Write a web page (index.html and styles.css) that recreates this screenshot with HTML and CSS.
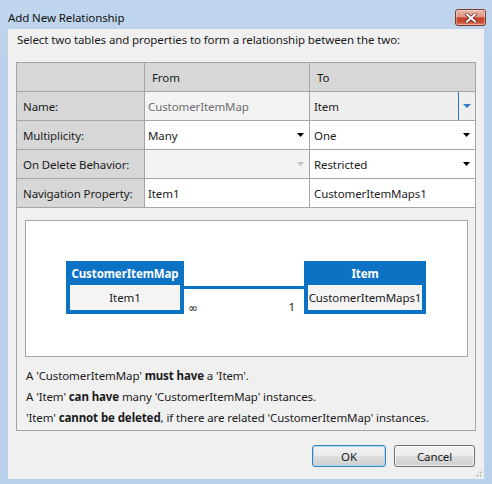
FILE: index.html
```html
<!DOCTYPE html>
<html>
<head>
<meta charset="utf-8">
<link rel="stylesheet" href="styles.css">
</head>
<body>
<div class="window">
  <div class="titlebar">
    <span class="title">Add New Relationship</span>
    <div class="close">
      <svg width="12" height="10" viewBox="0 0 12 10">
        <path d="M2 1.5 L10 8.5 M10 1.5 L2 8.5" stroke="#5a231a" stroke-width="3.4" stroke-linecap="square" fill="none"/>
        <path d="M2 1.5 L10 8.5 M10 1.5 L2 8.5" stroke="#ffffff" stroke-width="2" stroke-linecap="square" fill="none"/>
      </svg>
    </div>
  </div>
  <div class="client">
    <div class="instr">Select two tables and properties to form a relationship between the two:</div>
    <div class="group">
      <div class="grid">
        <div class="cell head"></div>
        <div class="cell head hdr">From</div>
        <div class="cell head hdr last">To</div>

        <div class="cell label">Name:</div>
        <div class="cell value disabled">CustomerItemMap</div>
        <div class="cell value focus last">
          <span>Item</span>
          <span class="dd-btn"><svg width="8" height="4" viewBox="0 0 8 4"><polygon points="0,0 8,0 4,4" fill="#2f7bc4"/></svg></span>
        </div>

        <div class="cell label">Multiplicity:</div>
        <div class="cell value combo">
          <span>Many</span>
          <svg class="arrow" width="7" height="4" viewBox="0 0 7 4"><polygon points="0,0 7,0 3.5,4" fill="#000"/></svg>
        </div>
        <div class="cell value combo last">
          <span>One</span>
          <svg class="arrow" width="7" height="4" viewBox="0 0 7 4"><polygon points="0,0 7,0 3.5,4" fill="#000"/></svg>
        </div>

        <div class="cell label">On Delete Behavior:</div>
        <div class="cell value combo disabled">
          <span></span>
          <svg class="arrow" width="7" height="4" viewBox="0 0 7 4"><polygon points="0,0 7,0 3.5,4" fill="#c2c2c2"/></svg>
        </div>
        <div class="cell value combo last">
          <span>Restricted</span>
          <svg class="arrow" width="7" height="4" viewBox="0 0 7 4"><polygon points="0,0 7,0 3.5,4" fill="#000"/></svg>
        </div>

        <div class="cell label">Navigation Property:</div>
        <div class="cell value">Item1</div>
        <div class="cell value last">CustomerItemMaps1</div>
      </div>

      <div class="diagram">
        <div class="entity entity-from">
          <div class="entity-head">CustomerItemMap</div>
          <div class="entity-body">Item1</div>
        </div>
        <div class="connector">
          <span class="mult inf">∞</span>
          <span class="mult">1</span>
        </div>
        <div class="entity entity-to">
          <div class="entity-head">Item</div>
          <div class="entity-body">CustomerItemMaps1</div>
        </div>
      </div>

      <div class="notes">
        <p>A 'CustomerItemMap' <b>must have</b> a 'Item'.</p>
        <p>A 'Item' <b>can have</b> many 'CustomerItemMap' instances.</p>
        <p>'Item' <b>cannot be deleted</b>, if there are related 'CustomerItemMap' instances.</p>
      </div>
    </div>

    <div class="buttons">
      <button class="btn btn-ok">OK</button>
      <button class="btn btn-cancel">Cancel</button>
    </div>
    <div class="grip"></div>
  </div>
</div>
</body>
</html>
```

FILE: styles.css
```css
html, body {
  margin: 0;
  padding: 0;
  width: 492px;
  height: 484px;
  overflow: hidden;
}

body {
  font-family: "Noto Sans", "Open Sans", sans-serif;
  font-size: 11.5px;
  letter-spacing: -0.1px;
  color: #1b1b1b;
}

.window {
  width: 492px;
  height: 484px;
  box-sizing: border-box;
  background: linear-gradient(#c1d6ee, #b9d1ea 60px, #b9d1ea);
  display: flex;
  flex-direction: column;
}

.titlebar {
  height: 29px;
  flex: none;
  display: flex;
  justify-content: space-between;
  align-items: flex-start;
  padding: 0 6px 0 8px;
}

.title {
  margin-top: 10px;
  line-height: 16px;
  color: #111;
}

.close {
  margin-top: 9px;
  width: 31px;
  height: 17px;
  box-sizing: border-box;
  border: 1px solid #7f3a2f;
  border-radius: 3px;
  background: linear-gradient(#ecb8aa 0%, #df9584 45%, #c9462f 52%, #c54a33 78%, #de8a72 100%);
  box-shadow: inset 0 0 0 1px rgba(255, 255, 255, 0.35);
  display: flex;
  align-items: center;
  justify-content: center;
}

.close svg {
  display: block;
}

.client {
  flex: 1;
  margin: 0 8px 5px 8px;
  background: #f0f0f0;
  position: relative;
}

.instr {
  padding-left: 9px;
  margin-top: 3px;
  line-height: 16px;
}

.group {
  margin: 14px 0 0 8px;
  width: 460px;
  box-sizing: border-box;
  border: 1px solid #a5a5a5;
  padding-bottom: 2px;
}

.grid {
  display: grid;
  grid-template-columns: 128px 165px 165px;
  grid-auto-rows: 29px;
}

.cell {
  box-sizing: border-box;
  border-right: 1px solid #a5a5a5;
  border-bottom: 1px solid #a5a5a5;
  display: flex;
  align-items: center;
  white-space: nowrap;
  background: #ffffff;
}

.cell.last {
  border-right: none;
}

.cell.head,
.cell.label {
  background: #d7d7d7;
}

.cell.label {
  padding-left: 6px;
}

.cell.hdr {
  padding-left: 7px;
}

.cell.value {
  padding-left: 3px;
}

.cell.last.value {
  padding-left: 4px;
}

.cell.disabled {
  background: #f3f3f3;
  color: #6d6d6d;
}

.cell.combo {
  justify-content: space-between;
  padding-right: 5px;
}

.cell.combo .arrow {
  display: block;
}

.cell.focus {
  background: #efefef;
  justify-content: space-between;
}

.dd-btn {
  align-self: stretch;
  width: 17px;
  box-sizing: border-box;
  border-left: 1px solid #2f77b8;
  display: flex;
  align-items: center;
  justify-content: center;
}

.dd-btn svg {
  display: block;
}

.diagram {
  margin: 12px 7px 0 8px;
  height: 137px;
  box-sizing: border-box;
  border: 1px solid #a5a5a5;
  background: #ffffff;
  display: flex;
  align-items: flex-start;
  padding: 40px 0 0 40px;
}

.entity {
  background: #0b72c4;
  padding: 0 4px 4px 4px;
  box-sizing: border-box;
}

.entity-from {
  width: 118px;
}

.entity-to {
  width: 122px;
}

.entity-head {
  height: 24px;
  color: #ffffff;
  font-weight: bold;
  display: flex;
  align-items: center;
  justify-content: center;
  white-space: nowrap;
}

.entity-body {
  height: 25px;
  background: #f4f4f4;
  display: flex;
  align-items: center;
  justify-content: center;
  white-space: nowrap;
}

.connector {
  width: 120px;
  margin-top: 25px;
  border-top: 3px solid #0b72c4;
  display: flex;
  justify-content: space-between;
  padding: 0 9px 0 4px;
  box-sizing: border-box;
}

.mult {
  margin-top: 11px;
  line-height: 14px;
}

.mult.inf {
  font-family: "DejaVu Sans", sans-serif;
  font-size: 12px;
  letter-spacing: 0;
  margin-top: 12px;
}

.notes {
  padding: 8px 0 0 9px;
}

.notes p {
  margin: 0;
  line-height: 21px;
}

.buttons {
  display: flex;
  justify-content: flex-end;
  gap: 8px;
  margin-top: 14px;
  padding-right: 9px;
}

.btn {
  height: 22px;
  box-sizing: border-box;
  border: 1px solid #707070;
  border-radius: 3px;
  background: linear-gradient(#f2f2f2 0%, #ebebeb 48%, #dddddd 52%, #cfcfcf 100%);
  font-family: inherit;
  font-size: 11.5px;
  letter-spacing: -0.1px;
  color: #1b1b1b;
  padding: 0;
  box-shadow: inset 0 0 0 1px rgba(255, 255, 255, 0.7);
}

.btn-ok {
  width: 74px;
  border-color: #3c7fb1;
  box-shadow: inset 0 0 0 1px #a6dcf5;
}

.btn-cancel {
  width: 81px;
}

.grip {
  position: absolute;
  right: 1px;
  bottom: 1px;
  width: 10px;
  height: 10px;
  background-image: radial-gradient(circle, #b4b4b4 0.9px, transparent 1.1px);
  background-size: 3px 3px;
  clip-path: polygon(100% 0, 100% 100%, 0 100%);
}
```
